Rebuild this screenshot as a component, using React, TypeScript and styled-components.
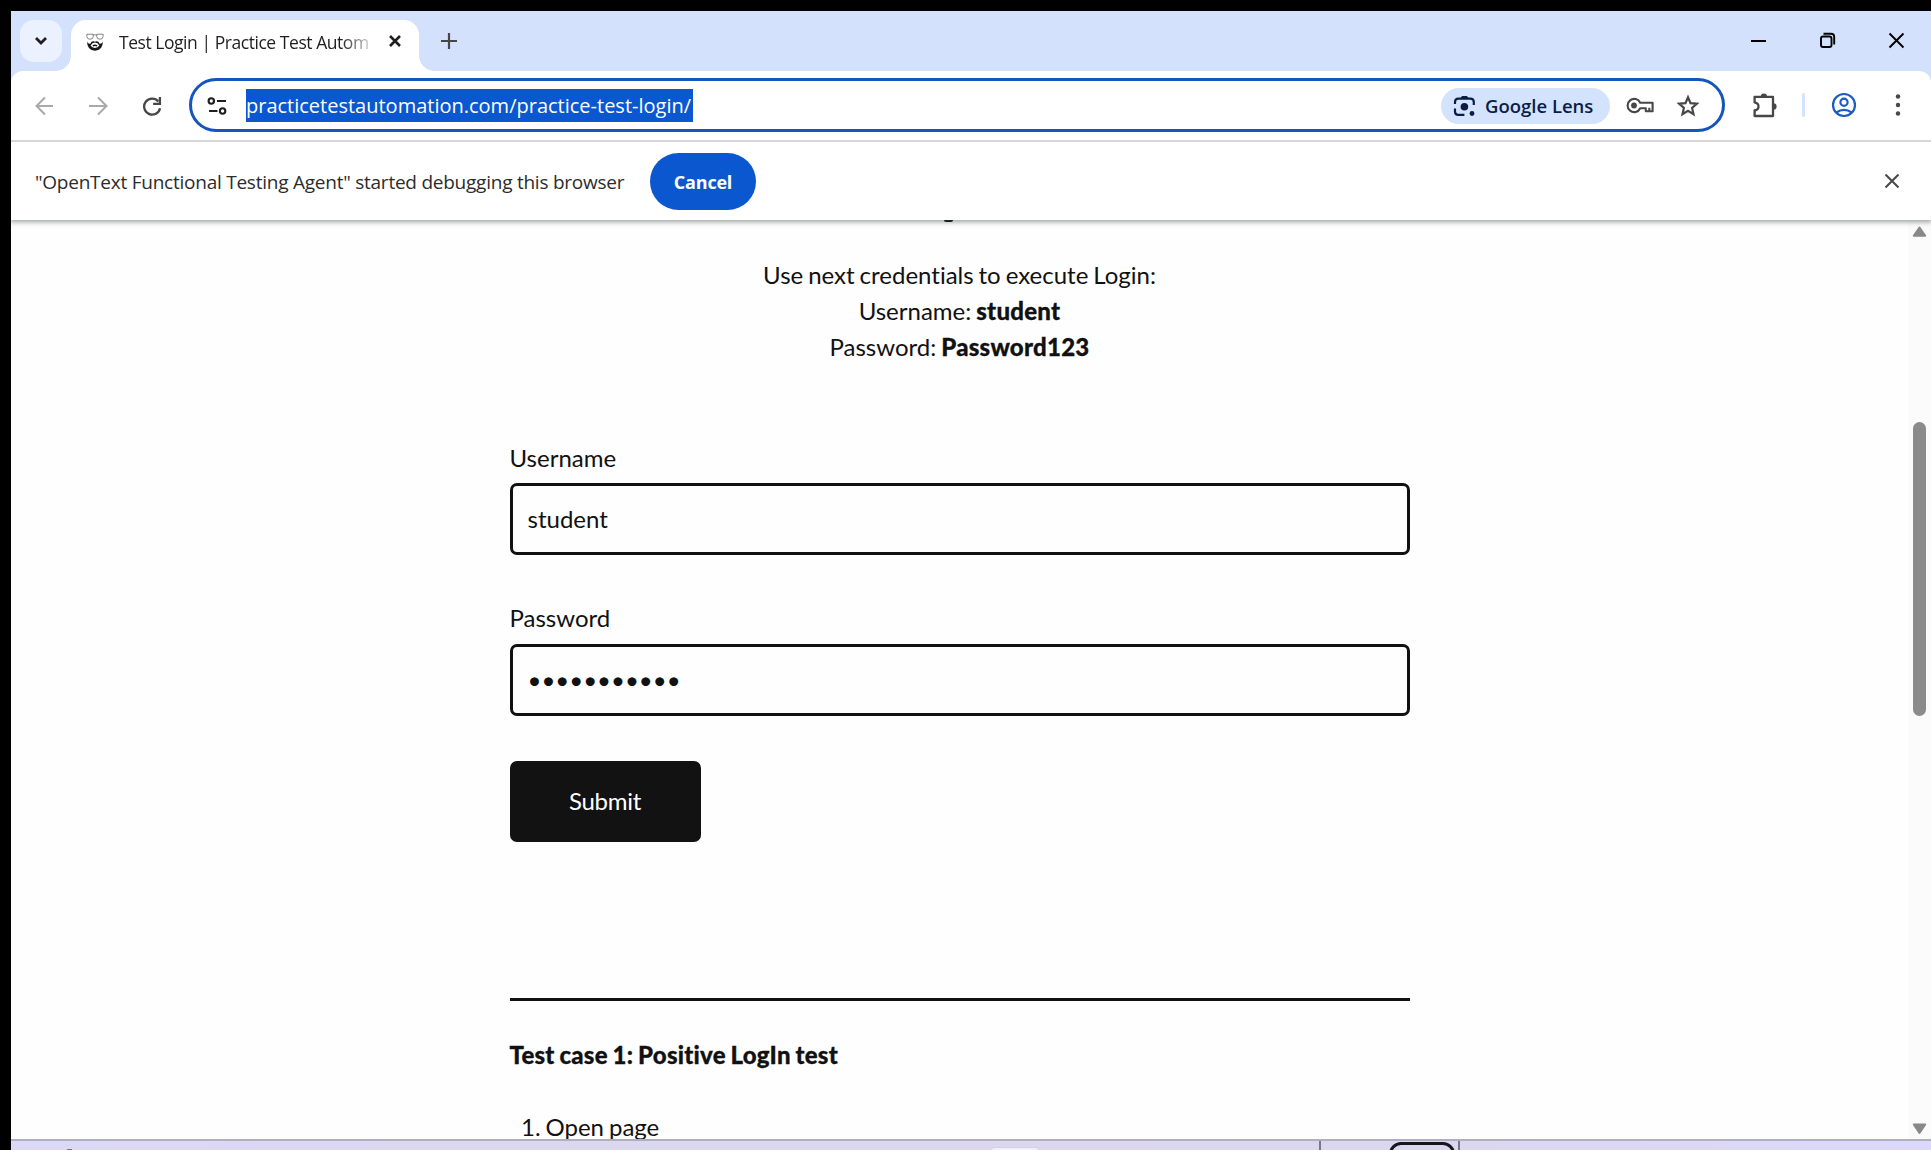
import React from "react";
import styled, { createGlobalStyle } from "styled-components";

const ui = `"Open Sans", "Noto Sans", sans-serif`;
const page = `Lato, "Open Sans", sans-serif`;

const GlobalStyle = createGlobalStyle`
  *, *::before, *::after { box-sizing: border-box; }
  body { margin: 0; background: #000; overflow: hidden; }
`;

const Screen = styled.div`
  width: 1931px;
  height: 1150px;
  padding: 11px 0 0 11px;
  background: #000;
  display: flex;
  flex-direction: column;
  overflow: hidden;
  font-family: ${ui};
`;

const TabStrip = styled.header`
  flex: 0 0 60px;
  background: #d3e1fd;
  display: flex;
  align-items: flex-start;
  padding: 9px 0 0 9px;
`;

const TabSearch = styled.button`
  width: 42px;
  height: 42px;
  border: 0;
  border-radius: 14px;
  padding: 0;
  background: #ebf1fe;
  display: grid;
  place-items: center;
`;

const Tab = styled.div`
  position: relative;
  width: 348px;
  height: 51px;
  margin-left: 9px;
  padding: 0 17px 7px 15px;
  display: flex;
  align-items: center;
  background: #fff;
  border-radius: 15px 15px 0 0;
  &::before, &::after {
    content: "";
    position: absolute;
    bottom: 0;
    width: 15px;
    height: 15px;
  }
  &::before {
    left: -15px;
    background: radial-gradient(circle at 0 0, transparent 14.5px, #fff 15px);
  }
  &::after {
    right: -15px;
    background: radial-gradient(circle at 100% 0, transparent 14.5px, #fff 15px);
  }
`;

const TabTitle = styled.span`
  width: 252px;
  margin-left: 15px;
  white-space: nowrap;
  font-size: 17.5px;
  letter-spacing: -0.45px;
  line-height: 28px;
  color: #1f1f1f;
  mask-image: linear-gradient(to right, #000 222px, rgba(0, 0, 0, 0.2) 251px);
`;

const TabClose = styled.span`
  display: grid;
  margin-left: 18px;
  padding-bottom: 2px;
`;

const NewTab = styled.span`
  display: grid;
  margin: 13px 0 0 22px;
`;

const WindowControls = styled.div`
  margin: 12px 26px 0 auto;
  display: flex;
  gap: 52px;
`;

const ToolbarBack = styled.div`
  flex: 0 0 71px;
  background: #d3e1fd;
`;

const Toolbar = styled.div`
  height: 71px;
  background: #fff;
  border-bottom: 2px solid #d6d8d8;
  border-radius: 12px 12px 0 0;
  display: flex;
  align-items: center;
  padding: 0 0 1px 22px;
`;

const NavIcons = styled.div`
  display: flex;
  gap: 30px;
  width: 156px;
  padding-top: 2px;
`;

const Omnibox = styled.div`
  width: 1536px;
  height: 54px;
  border: 3px solid #1555bd;
  border-radius: 27px;
  display: flex;
  align-items: center;
  padding: 1px 22px 0 15px;
`;

const Url = styled.span`
  margin-left: 19px;
  width: 447px;
  height: 33px;
  line-height: 34px;
  padding-left: 0;
  background: #0b57d0;
  color: #fff;
  font-size: 20px;
  white-space: nowrap;
`;

const LensChip = styled.div`
  margin-left: auto;
  width: 169px;
  height: 36px;
  border-radius: 18px;
  background: #d3e3fd;
  color: #0b1d45;
  font-size: 18.5px;
  font-weight: 600;
  display: flex;
  align-items: center;
  gap: 9px;
  padding-left: 12px;
  white-space: nowrap;
`;

const BarIcon = styled.span<{ $gap: number }>`
  display: grid;
  margin-left: ${(p) => p.$gap}px;
`;

const Separator = styled.i`
  width: 3px;
  height: 24px;
  margin: 0 26px 0 24px;
  border-radius: 2px;
  background: #d3e3fd;
`;

const InfoBar = styled.div`
  position: relative;
  z-index: 1;
  flex: 0 0 78px;
  background: #fff;
  box-shadow: 0 1px 5px 1px rgba(60, 70, 66, 0.5);
  clip-path: inset(0 0 -12px 0);
  display: flex;
  align-items: center;
  padding: 0 31px 0 24px;
`;

const InfoText = styled.span`
  width: 590px;
  padding-top: 2px;
  font-size: 19px;
  letter-spacing: -0.24px;
  color: #2b2c2c;
  white-space: nowrap;
`;

const CancelButton = styled.button`
  width: 106px;
  height: 57px;
  margin-left: 25px;
  border: 0;
  border-radius: 28.5px;
  background: #0b57d0;
  color: #fff;
  font: 700 18px ${ui};
  letter-spacing: -0.2px;
  padding: 2px 0 0;
`;

const InfoClose = styled.span`
  display: grid;
  margin-left: auto;
`;

const Viewport = styled.div`
  flex: 0 0 919px;
  display: flex;
  background: #fefefe;
  overflow: hidden;
`;

const Content = styled.main`
  position: relative;
  flex: 1;
  display: flex;
  flex-direction: column;
  align-items: center;
  font-family: ${page};
  font-size: 24px;
  line-height: 36px;
  word-spacing: -1.2px;
  font-variant-ligatures: none;
  color: #111;
`;

const TitleTail = styled.i`
  position: absolute;
  top: 0;
  left: 933px;
  width: 9px;
  height: 2px;
  border-radius: 0 0 5px 5px;
  background: #111;
`;

const Column = styled.div`
  width: 900px;
  padding-top: 37px;
`;

const Credentials = styled.p`
  margin: 0;
  text-align: center;
`;

const Strong = styled.b`
  font-weight: 900;
  letter-spacing: 0.25px;
  -webkit-text-stroke: 0.3px #111;
`;

const Field = styled.label<{ $top: number; $gap: number }>`
  display: flex;
  flex-direction: column;
  gap: ${(p) => p.$gap}px;
  margin-top: ${(p) => p.$top}px;
`;

const Input = styled.input`
  width: 900px;
  height: 72px;
  padding: 0 15px 2px;
  border: 3px solid #111;
  border-radius: 7px;
  background: #fefefe;
  font: 24px ${page};
  color: #111;
  outline: none;
`;

const Submit = styled.button`
  display: block;
  width: 191px;
  height: 81px;
  margin-top: 45px;
  padding: 0 0 2px;
  border: 0;
  border-radius: 7px;
  background: #121212;
  color: #fff;
  font: 24px ${page};
  letter-spacing: -0.25px;
`;

const Rule = styled.hr`
  height: 3px;
  margin: 156px 0 0;
  border: 0;
  background: #111;
`;

const CaseTitle = styled.h5`
  margin: 36px 0 0;
  font-size: 24px;
  line-height: 36px;
`;

const Steps = styled.ol`
  margin: 36px 0 0;
  padding-left: 36px;
`;

const ScrollTrack = styled.div`
  flex: 0 0 23px;
  background: #fbfbfb;
  display: flex;
  flex-direction: column;
  align-items: center;
  padding: 6px 0 4px;
`;

const Thumb = styled.i`
  width: 13px;
  height: 294px;
  margin-top: 184px;
  border-radius: 7px;
  background: #8b8b8b;
`;

const DownArrow = styled.span`
  margin-top: auto;
  display: grid;
`;

const Taskbar = styled.footer`
  flex: 0 0 11px;
  border-top: 2px solid #b0aec2;
  background: linear-gradient(to right, #dcd8f8, #dbd7ee 30%, #dcd7f0 75%, #dcd8fb);
  display: flex;
  align-items: flex-start;
  overflow: hidden;
`;

const TaskPeek = styled.i`
  width: 5px;
  height: 1px;
  margin: 8px 0 0 56px;
  background: #77738a;
`;

const TaskTile = styled.i`
  width: 52px;
  height: 20px;
  margin: 6px 0 0 917px;
  border-radius: 6px;
  border: 1px solid #d2cee4;
  background: #f1effa;
`;

const TaskLine = styled.i<{ $gap: number }>`
  width: 2px;
  height: 11px;
  margin-left: ${(p) => p.$gap}px;
  background: #79768a;
`;

const TaskOutline = styled.i`
  width: 66px;
  height: 30px;
  margin: 1px 0 0 68px;
  border: 3px solid #17161c;
  border-radius: 12px;
`;

function Stroke({ w, h, d, color = "#1f1f1f", sw = 2 }: {
  w: number; h: number; d: string; color?: string; sw?: number;
}) {
  return (
    <svg width={w} height={h} viewBox={`0 0 ${w} ${h}`} fill="none" stroke={color} strokeWidth={sw}>
      <path d={d} />
    </svg>
  );
}

const Favicon = () => (
  <svg width="18" height="18" viewBox="0 0 18 18" fill="none">
    <path d="M.8 1.2h6.4v2.4q0 2.6-3.1 2.6T.9 3.6zM10.8 1.2h6.4l-.1 2.4q-.1 2.6-3.2 2.6t-3.1-2.6zM7.2 2.2q1.8-1 3.6 0" stroke="#777" strokeWidth=".9" />
    <path d="M1 8.5q1 2.600 3.400 2.200.8-2.400 3-2.400 1.600 0 1.600.7 0-.7 1.600-.7 2.200 0 3 2.400 2.400.4 3.400-2.200-.2 9-8 9.200-7.800-.2-8-9.200z" fill="#161616" />
    <path d="M4.600 12.600q1.500-3 4.400-3t4.400 3q-1.400 2.400-4.400 2.400t-4.400-2.400z" fill="#fff" />
    <path d="M6.800 12.900q2.200-1.300 4.400 0" stroke="#161616" strokeWidth="1.300" />
  </svg>
);

const Reload = () => (
  <svg width="22" height="20" viewBox="-1 0 22 20" fill="none" stroke="#474747" strokeWidth="2.300">
    <path d="M16.300 5.500A8 8 0 1 0 18 12.200" />
    <path d="M17.900 1v6.800h-6.800" />
  </svg>
);

const Tune = () => (
  <svg width="20" height="18" viewBox="0 0 20 18" fill="none" stroke="#1f1f1f" strokeWidth="2.100">
    <circle cx="4.300" cy="4" r="2.700" />
    <path d="M10 4h9M2 14h8.500" />
    <circle cx="15.600" cy="14" r="2.700" />
  </svg>
);

const Lens = () => (
  <svg width="23" height="22" viewBox="0 0 23 22" fill="none" stroke="#0b1d45" strokeWidth="2.200">
    <path d="M2 9V7q0-3.400 3.400-3.400h12Q20.800 3.600 20.800 7v3M2 13.500v3Q2 19.900 5.400 19.900h6" />
    <path d="M7.500 3.200 9 1h5l1.500 2.200z" fill="#0b1d45" stroke="none" />
    <circle cx="11.400" cy="11.700" r="3.800" fill="#0b1d45" stroke="none" />
    <circle cx="19" cy="18.500" r="2.400" fill="#0b1d45" stroke="none" />
  </svg>
);

const Key = () => (
  <svg width="28" height="17" viewBox="0 0 28 17" fill="none" stroke="#474747" strokeWidth="2.100">
    <path d="M14.200 5.800H26.600V14.300H19.800V11.200H14.200A6.600 6.600 0 1 1 14.200 5.800z" strokeLinejoin="round" />
    <path d="M23.300 14v-3.200" />
    <circle cx="8" cy="8.500" r="2.900" fill="#474747" stroke="none" />
  </svg>
);

const Star = () => (
  <svg width="24" height="23" viewBox="0 0 24 23" fill="none" stroke="#474747" strokeWidth="2.200">
    <path d="M12 3.200 14.500 9.100 20.900 9.700 16.100 13.900 17.500 20.200 12 16.900 6.500 20.200 7.900 13.900 3.100 9.700 9.500 9.100z" />
  </svg>
);

const Puzzle = () => (
  <svg width="26" height="26" viewBox="0 0 26 26" fill="none" stroke="#474747" strokeWidth="2.300">
    <path d="M2.600 4.800H21V24H2.600V18.500Q6.500 17.800 6.500 14.400T2.600 10.300z" strokeLinejoin="round" />
    <path d="M8.800 4.500a3.100 3.100 0 0 1 6.200 0zM21.400 11.200a3.200 3.200 0 0 1 0 6.400z" fill="#474747" stroke="none" />
  </svg>
);

const Profile = () => (
  <svg width="26" height="26" viewBox="0 0 26 26" fill="none" stroke="#1a5bc4" strokeWidth="2.200">
    <circle cx="13" cy="13" r="11" />
    <circle cx="13" cy="10.300" r="3.600" />
    <path d="M5.300 20.500q7.700-5.200 15.400 0" />
  </svg>
);

const Dots = () => (
  <svg width="6" height="24" viewBox="0 0 6 24" fill="#474747">
    <circle cx="3" cy="3.500" r="2.200" />
    <circle cx="3" cy="12" r="2.200" />
    <circle cx="3" cy="20.500" r="2.200" />
  </svg>
);

const Restore = () => (
  <svg width="17" height="17" viewBox="0 0 17 17" fill="none" stroke="#000" strokeWidth="1.900">
    <rect x="2" y="4.500" width="10.500" height="10.500" rx="2" />
    <path d="M4.500 1.800H12q3.200 0 3.200 3.200v7.500" />
  </svg>
);

const Triangle = ({ down = false }: { down?: boolean }) => (
  <svg width="15" height="12" viewBox="0 0 15 12" fill="#888" stroke="#888" strokeWidth="2" strokeLinejoin="round">
    <path d={down ? "M1.800 1.500h11.400L7.500 10z" : "M1.800 9.800h11.400L7.500 1.500z"} />
  </svg>
);

export default function App() {
  return (
    <>
      <GlobalStyle />
      <Screen>
        <TabStrip>
          <TabSearch><Stroke w={14} h={10} d="M2 2l5 5 5-5" sw={2.8} /></TabSearch>
          <Tab>
            <Favicon />
            <TabTitle>Test Login | Practice Test Autom</TabTitle>
            <TabClose><Stroke w={14} h={14} d="M2 2l10 10M12 2L2 12" sw={2.6} /></TabClose>
          </Tab>
          <NewTab><Stroke w={16} h={16} d="M8 0v16M0 8h16" sw={2.2} color="#474747" /></NewTab>
          <WindowControls>
            <Stroke w={17} h={17} d="M1 9h15" sw={2} color="#000" />
            <Restore />
            <Stroke w={17} h={17} d="M1.500 1.500l14 14M15.500 1.500l-14 14" sw={1.9} color="#000" />
          </WindowControls>
        </TabStrip>
        <ToolbarBack>
          <Toolbar>
            <NavIcons>
              <Stroke w={24} h={20} d="M20 10H4M12 1.500L3.500 10 12 18.500" color="#a9a9a9" />
              <Stroke w={24} h={20} d="M2 10h17M11 1.500l8.500 8.500-8.500 8.500" color="#a9a9a9" />
              <Reload />
            </NavIcons>
            <Omnibox>
              <Tune />
              <Url>practicetestautomation.com/practice-test-login/</Url>
              <LensChip><Lens />Google Lens</LensChip>
              <BarIcon $gap={16}><Key /></BarIcon>
              <BarIcon $gap={22}><Star /></BarIcon>
            </Omnibox>
            <BarIcon $gap={27}><Puzzle /></BarIcon>
            <Separator />
            <Profile />
            <BarIcon $gap={38}><Dots /></BarIcon>
          </Toolbar>
        </ToolbarBack>
        <InfoBar>
          <InfoText>"OpenText Functional Testing Agent" started debugging this browser</InfoText>
          <CancelButton>Cancel</CancelButton>
          <InfoClose><Stroke w={16} h={16} d="M1.500 1.500l13 13M14.500 1.500l-13 13" color="#474747" /></InfoClose>
        </InfoBar>
        <Viewport>
          <Content>
            <TitleTail />
            <Column>
              <Credentials>
                Use next credentials to execute Login:<br />
                Username: <Strong>student</Strong><br />
                Password: <Strong>Password123</Strong>
              </Credentials>
              <Field $top={75} $gap={7}>Username<Input type="text" defaultValue="student" /></Field>
              <Field $top={45} $gap={8}>Password<Input type="password" defaultValue="Password123" /></Field>
              <Submit>Submit</Submit>
              <Rule />
              <CaseTitle><Strong>Test case 1: Positive LogIn test</Strong></CaseTitle>
              <Steps><li>Open page</li></Steps>
            </Column>
          </Content>
          <ScrollTrack>
            <Triangle />
            <Thumb />
            <DownArrow><Triangle down /></DownArrow>
          </ScrollTrack>
        </Viewport>
        <Taskbar>
          <TaskPeek />
          <TaskTile />
          <TaskLine $gap={278} />
          <TaskOutline />
          <TaskLine $gap={3} />
        </Taskbar>
      </Screen>
    </>
  );
}
